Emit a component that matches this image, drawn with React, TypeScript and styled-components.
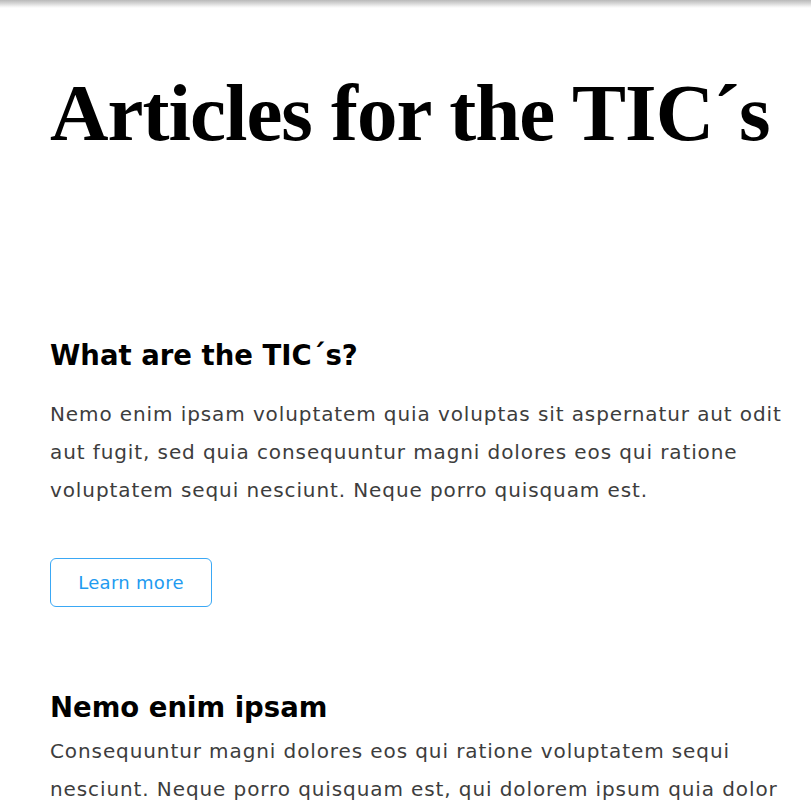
import React from "react";
import styled, { createGlobalStyle } from "styled-components";

const Global = createGlobalStyle`
  html, body { margin: 0; padding: 0; background: #fff; }
  body { font-family: "DejaVu Sans", "Liberation Sans", sans-serif; }
`;

const Page = styled.div`
  min-height: 811px;
  background: #fff;
`;

const TopShade = styled.div`
  height: 8px;
  background: linear-gradient(to bottom, #b9b9b9 0%, #d8d8d8 45%, #f6f6f6 85%, #ffffff 100%);
`;

const Main = styled.main`
  padding: 54.7px 20px 0 50px;
  max-width: 741px;
`;

const Title = styled.h1`
  margin: 0;
  font-family: "Liberation Serif", "DejaVu Serif", serif;
  font-weight: 700;
  font-size: 81px;
  line-height: 100px;
  color: #000;
  letter-spacing: -1px;
  white-space: nowrap;
`;

const Article = styled.section<{ $top: number }>`
  margin-top: ${(p) => p.$top}px;
`;

const Heading = styled.h2`
  margin: 0;
  font-family: "DejaVu Sans", sans-serif;
  font-weight: 700;
  font-size: 27.5px;
  line-height: 36px;
  color: #000;
`;

const Text = styled.p<{ $top: number }>`
  margin: ${(p) => p.$top}px 0 0;
  font-family: "DejaVu Sans", sans-serif;
  font-size: 20px;
  line-height: 38px;
  letter-spacing: 0.9px;
  color: #3d3d3d;
`;

const Button = styled.button`
  display: block;
  margin-top: 49px;
  width: 162px;
  height: 49px;
  padding: 0;
  border: 1px solid #3aa8f5;
  border-radius: 6px;
  background: #fff;
  color: #1f9bf0;
  font-family: "DejaVu Sans", sans-serif;
  font-size: 18px;
  letter-spacing: 0.3px;
  cursor: pointer;
`;

export default function App() {
  return (
    <Page>
      <Global />
      <TopShade />
      <Main>
        <Title>Articles for the TIC´s</Title>
        <Article $top={174.8}>
          <Heading>What are the TIC´s?</Heading>
          <Text $top={21.5}>
            Nemo enim ipsam voluptatem quia voluptas sit aspernatur aut odit aut fugit, sed quia consequuntur magni
            dolores eos qui ratione voluptatem sequi nesciunt. Neque porro quisquam est.
          </Text>
          <Button>Learn more</Button>
        </Article>
        <Article $top={82.5}>
          <Heading>Nemo enim ipsam</Heading>
          <Text $top={6.5}>
            Consequuntur magni dolores eos qui ratione voluptatem sequi nesciunt. Neque porro quisquam est, qui dolorem
            ipsum quia dolor sit amet.
          </Text>
        </Article>
      </Main>
    </Page>
  );
}
